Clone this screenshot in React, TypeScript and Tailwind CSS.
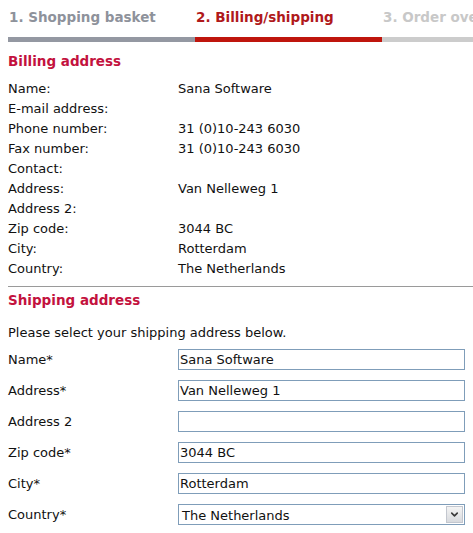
import { ChevronDown } from 'lucide-react';

const BillingShipping = () => {
  const steps = [
    { label: "1. Shopping basket", text: "text-[#8e929b]", bar: "bg-[#9498a2]" },
    { label: "2. Billing/shipping", text: "text-[#b0191b]", bar: "bg-[#bf150d]" },
    { label: "3. Order overview", text: "text-[#c8c8c8]", bar: "bg-[#cccccc]" },
  ];

  const billing = [
    ["Name:", "Sana Software"],
    ["E-mail address:", ""],
    ["Phone number:", "31 (0)10-243 6030"],
    ["Fax number:", "31 (0)10-243 6030"],
    ["Contact:", ""],
    ["Address:", "Van Nelleweg 1"],
    ["Address 2:", ""],
    ["Zip code:", "3044 BC"],
    ["City:", "Rotterdam"],
    ["Country:", "The Netherlands"],
  ];

  const shipping = [
    ["Name*", "Sana Software"],
    ["Address*", "Van Nelleweg 1"],
    ["Address 2", ""],
    ["Zip code*", "3044 BC"],
    ["City*", "Rotterdam"],
  ];

  return (
    <div className="min-h-screen bg-white pl-2 overflow-hidden font-['DejaVu_Sans',sans-serif] text-[13px] text-[#111]">
      {/* Steps */}
      <div className="flex w-[600px]">
        {steps.map((s, i) => (
          <div key={i} className="w-[187px] shrink-0">
            <div className={`h-[37px] pt-[8px] pl-[1px] leading-[18px] text-[13.5px] font-bold whitespace-nowrap ${s.text}`}>
              {s.label}
            </div>
            <div className={`h-[5px] ${s.bar}`} />
          </div>
        ))}
      </div>

      {/* Billing address */}
      <h2 className="mt-[9px] leading-5 text-[13.5px] font-bold text-[#c3123e]">Billing address</h2>
      <div className="mt-[8px]">
        {billing.map(([label, value], i) => (
          <div key={i} className="flex h-5 items-center leading-5">
            <span className="w-[170px] shrink-0">{label}</span>
            <span>{value}</span>
          </div>
        ))}
      </div>

      <div className="mt-[7px] h-px bg-[#9a9a9a]" />

      {/* Shipping address */}
      <h2 className="mt-[3px] leading-5 text-[13.5px] font-bold text-[#c3123e]">Shipping address</h2>
      <p className="mt-[13px] leading-5">Please select your shipping address below.</p>

      <div className="mt-[6px] flex flex-col gap-[10px]">
        {shipping.map(([label, value], i) => (
          <div key={i} className="flex h-[21px] items-center">
            <span className="w-[170px] shrink-0">{label}</span>
            <div className="w-[287px] h-[21px] border border-[#7f9db9] bg-white pl-[1px] leading-[19px] whitespace-nowrap">
              {value}
            </div>
          </div>
        ))}
        <div className="flex h-[21px] items-center">
          <span className="w-[170px] shrink-0">Country*</span>
          <div className="w-[287px] h-[21px] border border-[#7f9db9] bg-white flex items-center justify-between">
            <span className="pl-[3px] pt-[3px] leading-[18px]">The Netherlands</span>
            <div className="mr-px w-[17px] h-[17px] border border-[#c3c7cf] bg-gradient-to-b from-[#f4f4f4] to-[#d8dade] flex items-center justify-center">
              <ChevronDown size={11} strokeWidth={3.5} className="text-[#3a3a3a]" />
            </div>
          </div>
        </div>
      </div>
    </div>
  );
};

export default BillingShipping;
